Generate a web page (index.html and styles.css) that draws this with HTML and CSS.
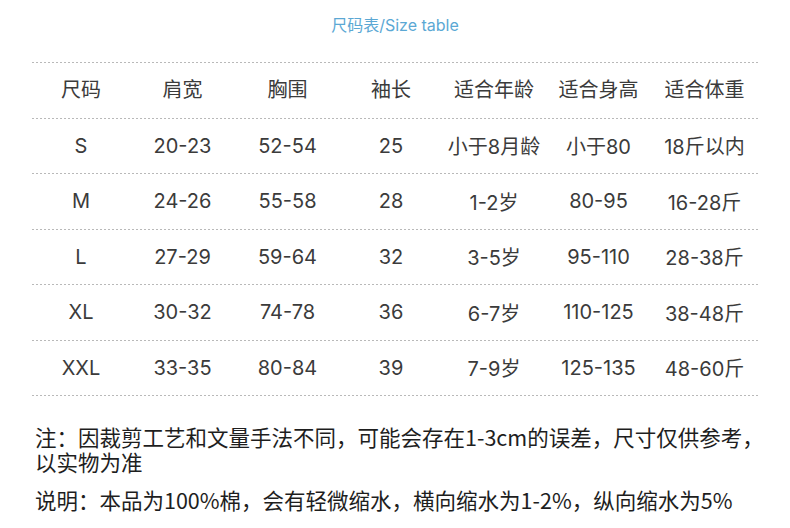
FILE: index.html
```html
<!DOCTYPE html>
<html lang="zh-CN">
<head>
<meta charset="utf-8">
<title>尺码表</title>
<link rel="stylesheet" href="styles.css">
</head>
<body>
<div class="page">
  <h1 class="title">尺码表/Size table</h1>
  <div class="table">
    <div class="row head">
      <div>尺码</div><div>肩宽</div><div>胸围</div><div>袖长</div><div>适合年龄</div><div>适合身高</div><div>适合体重</div>
    </div>
    <div class="row">
      <div>S</div><div>20-23</div><div>52-54</div><div>25</div><div>小于8月龄</div><div>小于80</div><div>18斤以内</div>
    </div>
    <div class="row">
      <div>M</div><div>24-26</div><div>55-58</div><div>28</div><div>1-2岁</div><div>80-95</div><div>16-28斤</div>
    </div>
    <div class="row">
      <div>L</div><div>27-29</div><div>59-64</div><div>32</div><div>3-5岁</div><div>95-110</div><div>28-38斤</div>
    </div>
    <div class="row">
      <div>XL</div><div>30-32</div><div>74-78</div><div>36</div><div>6-7岁</div><div>110-125</div><div>38-48斤</div>
    </div>
    <div class="row">
      <div>XXL</div><div>33-35</div><div>80-84</div><div>39</div><div>7-9岁</div><div>125-135</div><div>48-60斤</div>
    </div>
  </div>
  <div class="notes">
    <p class="note">注：因裁剪工艺和文量手法不同，可能会存在1-3cm的误差，尺寸仅供参考，以实物为准</p>
    <p class="note">说明：本品为100%棉，会有轻微缩水，横向缩水为1-2%，纵向缩水为5%</p>
  </div>
</div>
</body>
</html>
```

FILE: styles.css
```css
html, body {
  margin: 0;
  padding: 0;
  background: #ffffff;
}
body {
  width: 790px;
  height: 528px;
  overflow: hidden;
  font-family: "Inter", "Noto Sans CJK SC", sans-serif;
}
.page {
  display: flex;
  flex-direction: column;
}
.title {
  margin: 0;
  height: 62px;
  padding-top: 13px;
  box-sizing: border-box;
  text-align: center;
  font-size: 16px;
  font-weight: 400;
  line-height: 24px;
  color: #5ba8d4;
}
.table {
  margin-left: 32px;
  width: 726px;
  display: flex;
  flex-direction: column;
  background-image: repeating-linear-gradient(90deg, #b9b9b9 0 2px, transparent 2px 4px);
  background-size: 100% 1px;
  background-repeat: no-repeat;
  padding-top: 1px;
}
.row {
  display: grid;
  grid-template-columns: 98px 105px 105px 102px 104px 105px 107px;
  height: 55.5px;
  align-items: center;
  text-align: center;
  font-size: 20px;
  color: #3b3b3b;
  background-image: repeating-linear-gradient(90deg, #b9b9b9 0 2px, transparent 2px 4px);
  background-size: 100% 1px;
  background-position: 0 100%;
  background-repeat: no-repeat;
  box-sizing: border-box;
  padding-bottom: 1px;
}
.head {
  padding-bottom: 4px;
}
.notes {
  padding: 28px 8px 0 35px;
  display: flex;
  flex-direction: column;
  gap: 13px;
}
.note {
  margin: 0;
  font-family: "Noto Sans CJK SC", sans-serif;
  font-size: 21.5px;
  line-height: 25px;
  color: #1e1e1e;
}
```
